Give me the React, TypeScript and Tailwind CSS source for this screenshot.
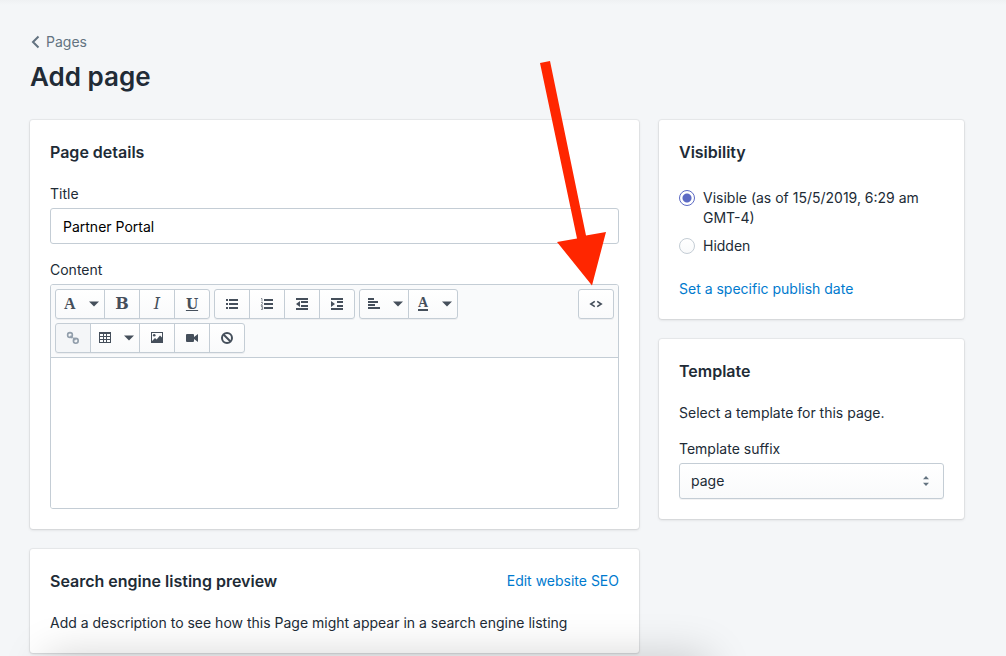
import type { ReactNode } from "react";

const cardClass =
  "rounded-[3px] bg-white p-5 shadow-[0_0_0_1px_rgba(63,63,68,0.06),0_1px_3px_0_rgba(63,63,68,0.16)]";

function Card({ children }: { children: ReactNode }) {
  return <section className={cardClass}>{children}</section>;
}

function CardTitle({ children }: { children: ReactNode }) {
  return <h2 className="text-base leading-6 font-semibold text-[#212b36]">{children}</h2>;
}

function Caret() {
  return (
    <svg width="10" height="6" viewBox="0 0 10 6" fill="currentColor" aria-hidden="true">
      <path d="M0 0.5H10L5 5.5Z" />
    </svg>
  );
}

function ToolButton({
  label,
  menu = false,
  disabled = false,
  children,
}: {
  label: string;
  menu?: boolean;
  disabled?: boolean;
  children: ReactNode;
}) {
  const width = menu ? "w-[50px] justify-between pr-[5px] pl-2" : "w-9 justify-center";
  const tone = disabled
    ? "bg-[#f4f6f8] text-[#919eab]"
    : "bg-linear-to-b from-white to-[#f9fafb] text-[#454f5b]";
  return (
    <button
      type="button"
      aria-label={label}
      disabled={disabled}
      className={`-ml-px flex h-[30px] items-center border border-[#c4cdd5] first:ml-0 first:rounded-l-[3px] last:rounded-r-[3px] ${width} ${tone}`}
    >
      {children}
      {menu && <Caret />}
    </button>
  );
}

function ToolGroup({ children }: { children: ReactNode }) {
  return <div className="flex rounded-[3px] shadow-[0_1px_0_0_rgba(22,29,37,0.05)]">{children}</div>;
}

function Icon({ children, size = 14 }: { children: ReactNode; size?: number }) {
  return (
    <svg width={size} height={size} viewBox="0 0 14 14" fill="currentColor" aria-hidden="true">
      {children}
    </svg>
  );
}

const letter = "font-['DejaVu_Serif',serif] leading-5";

function Toolbar() {
  return (
    <div className="flex items-start justify-between border-b border-[#c4cdd5] bg-[#f9fafb] p-1">
      <div className="flex flex-col gap-1">
        <div className="flex gap-1">
          <ToolGroup>
            <ToolButton label="Formatting" menu>
              <span className="font-['Liberation_Serif',serif] text-base leading-5 font-bold">A</span>
            </ToolButton>
            <ToolButton label="Bold">
              <span className={`${letter} text-base font-bold`}>B</span>
            </ToolButton>
            <ToolButton label="Italic">
              <span className={`${letter} text-base italic`}>I</span>
            </ToolButton>
            <ToolButton label="Underline">
              <span className={`${letter} text-sm font-bold underline underline-offset-1`}>U</span>
            </ToolButton>
          </ToolGroup>
          <ToolGroup>
            <ToolButton label="Bulleted list">
              <Icon>
                <path d="M1 2h2v2H1zM1 6h2v2H1zM1 10h2v2H1zM4 2h9v2H4zM4 6h9v2H4zM4 10h9v2H4z" />
              </Icon>
            </ToolButton>
            <ToolButton label="Numbered list">
              <Icon>
                <path d="M4 2h9v2H4zM4 6h9v2H4zM4 10h9v2H4z" />
                <path
                  d="M1 1.5h1v3M1 5.5h1.5v1L1 8.3h2M1 9.5h1.6v3H1M1.4 11h1.2"
                  fill="none"
                  stroke="currentColor"
                  strokeWidth="0.6"
                />
              </Icon>
            </ToolButton>
            <ToolButton label="Outdent">
              <Icon>
                <path d="M1 1h12v2H1zM6 4h7v2H6zM6 8h7v2H6zM1 11h12v2H1zM5 4v6L1 7z" />
              </Icon>
            </ToolButton>
            <ToolButton label="Indent">
              <Icon>
                <path d="M1 1h12v2H1zM7 4h6v2H7zM7 8h6v2H7zM1 11h12v2H1zM1 4v6l4-3z" />
              </Icon>
            </ToolButton>
          </ToolGroup>
          <ToolGroup>
            <ToolButton label="Alignment" menu>
              <Icon>
                <path d="M0 1h6v2H0zM0 4h10v2H0zM0 7h7v2H0zM0 10h12v2H0z" />
              </Icon>
            </ToolButton>
            <ToolButton label="Color" menu>
              <span className="flex w-3 flex-col items-center">
                <span className="font-['Liberation_Serif',serif] text-sm leading-3 font-bold">A</span>
                <span className="h-0.5 w-2.5 bg-[#454f5b]" />
              </span>
            </ToolButton>
          </ToolGroup>
        </div>
        <div className="flex gap-1">
          <ToolGroup>
            <ToolButton label="Insert link" disabled>
              <Icon>
                <g fill="none" stroke="currentColor" strokeWidth="1.6">
                  <circle cx="4" cy="4" r="2.4" />
                  <circle cx="9.8" cy="9.8" r="2.4" />
                  <path d="M4.6 4.6l1.8 2.6M7.400 6.600l1.900 2.600" />
                </g>
              </Icon>
            </ToolButton>
            <ToolButton label="Insert table" menu>
              <Icon>
                <path
                  fillRule="evenodd"
                  d="M0 1h12v11H0zM1 3v2h3V3zM5 3v2h2V3zM8 3v2h3V3zM1 6v2h3V6zM5 6v2h2V6zM8 6v2h3V6zM1 9v2h3V9zM5 9v2h2V9zM8 9v2h3V9z"
                />
              </Icon>
            </ToolButton>
            <ToolButton label="Insert image">
              <Icon>
                <path
                  fillRule="evenodd"
                  d="M1 1h12v11H1zM2 2v8l3-3 1.6 1.6L10 4.5l2 2V2z"
                />
                <circle cx="4.2" cy="4.2" r="1.3" />
              </Icon>
            </ToolButton>
            <ToolButton label="Insert video">
              <Icon>
                <path d="M2 3h6a1 1 0 0 1 1 1v2l4-3v8L9 8v2a1 1 0 0 1-1 1H2a1 1 0 0 1-1-1V4a1 1 0 0 1 1-1z" />
              </Icon>
            </ToolButton>
            <ToolButton label="Clear formatting">
              <Icon>
                <g fill="none" stroke="currentColor" strokeWidth="2">
                  <circle cx="7" cy="7" r="5" />
                  <path d="M3.5 3.5l7 7" />
                </g>
              </Icon>
            </ToolButton>
          </ToolGroup>
        </div>
      </div>
      <ToolGroup>
        <ToolButton label="Show HTML">
          <Icon>
            <path
              d="M5.8 4.4L1.8 7l4 2.6M8.2 4.4l4 2.6-4 2.6"
              fill="none"
              stroke="currentColor"
              strokeWidth="1.6"
            />
          </Icon>
        </ToolButton>
      </ToolGroup>
    </div>
  );
}

const radioClass =
  "mt-0.5 size-4 shrink-0 appearance-none rounded-full border border-[#c4cdd5] bg-linear-to-b from-white to-[#f9fafb] checked:border-[#5c6ac4] checked:bg-[radial-gradient(circle,#5c6ac4_4px,white_5px)]";

export default function App() {
  return (
    <div className="relative min-h-screen overflow-hidden bg-[#f4f6f8] bg-[linear-gradient(#eff1f3,#f4f6f8_5px)] pt-8 pr-[42px] pl-[30px] font-['Inter',sans-serif] text-sm leading-5 text-[#212b36]">
      <header>
        <a href="#pages" className="flex w-fit items-center gap-1 text-[#637381]">
          <svg
            width="12"
            height="14"
            viewBox="0 0 12 14"
            fill="none"
            stroke="currentColor"
            strokeWidth="2"
            aria-hidden="true"
          >
            <path d="M8.5 1.5L3 7l5.5 5.5" />
          </svg>
          Pages
        </a>
        <h1 className="mt-2 text-[26px] leading-[34px] font-semibold">Add page</h1>
      </header>

      <main className="mt-[26px] grid grid-cols-[609fr_305fr] items-start gap-5">
        <div className="flex flex-col gap-5">
          <Card>
            <CardTitle>Page details</CardTitle>
            <label htmlFor="title" className="mt-5 block">
              Title
            </label>
            <input
              id="title"
              type="text"
              defaultValue="Partner Portal"
              className="mt-1 block h-9 w-full rounded-[3px] border border-[#c4cdd5] bg-white px-3 text-black"
            />
            <label htmlFor="content" className="mt-4 block">
              Content
            </label>
            <div className="mt-1 overflow-hidden rounded-[3px] border border-[#c4cdd5]">
              <Toolbar />
              <textarea id="content" className="block h-[150px] w-full resize-none bg-white p-3" />
            </div>
          </Card>
          <Card>
            <div className="flex items-center justify-between">
              <CardTitle>Search engine listing preview</CardTitle>
              <a href="#seo" className="text-[#007ace]">
                Edit website SEO
              </a>
            </div>
            <p className="mt-5">
              Add a description to see how this Page might appear in a search engine listing
            </p>
          </Card>
        </div>

        <div className="flex flex-col gap-5">
          <Card>
            <CardTitle>Visibility</CardTitle>
            <div className="mt-6 flex flex-col gap-2">
              <label className="flex gap-2">
                <input type="radio" name="visibility" defaultChecked className={radioClass} />
                <span>Visible (as of 15/5/2019, 6:29 am GMT-4)</span>
              </label>
              <label className="flex gap-2">
                <input type="radio" name="visibility" className={radioClass} />
                <span>Hidden</span>
              </label>
            </div>
            <a href="#publish" className="mt-[23px] block w-fit text-[#007ace]">
              Set a specific publish date
            </a>
          </Card>
          <Card>
            <CardTitle>Template</CardTitle>
            <p className="mt-5">Select a template for this page.</p>
            <label htmlFor="suffix" className="mt-4 block">
              Template suffix
            </label>
            <div className="relative mt-1">
              <select
                id="suffix"
                className="block h-9 w-full appearance-none rounded-[3px] border border-[#c4cdd5] bg-linear-to-b from-white to-[#f9fafb] px-[11px] shadow-[0_1px_0_0_rgba(22,29,37,0.05)]"
              >
                <option>page</option>
              </select>
              <svg
                className="pointer-events-none absolute top-3 right-3.5"
                width="8"
                height="12"
                viewBox="0 0 8 12"
                fill="#637381"
                aria-hidden="true"
              >
                <path d="M1 4.2L4 1l3 3.2zM1 7.8h6L4 11z" />
              </svg>
            </div>
          </Card>
        </div>
      </main>

      <div className="pointer-events-none absolute top-full left-[50px] h-20 w-[655px] shadow-[0_4px_44px_4px_rgba(0,0,0,0.18)]" />

      <svg
        className="pointer-events-none absolute top-[60px] left-[540px]"
        width="68"
        height="226"
        viewBox="0 0 68 226"
        fill="#ff2600"
        aria-hidden="true"
      >
        <path d="M0 3L10 1L46 175.5L66 172L52 225.5L17 182L37 178.5Z" />
      </svg>
    </div>
  );
}
